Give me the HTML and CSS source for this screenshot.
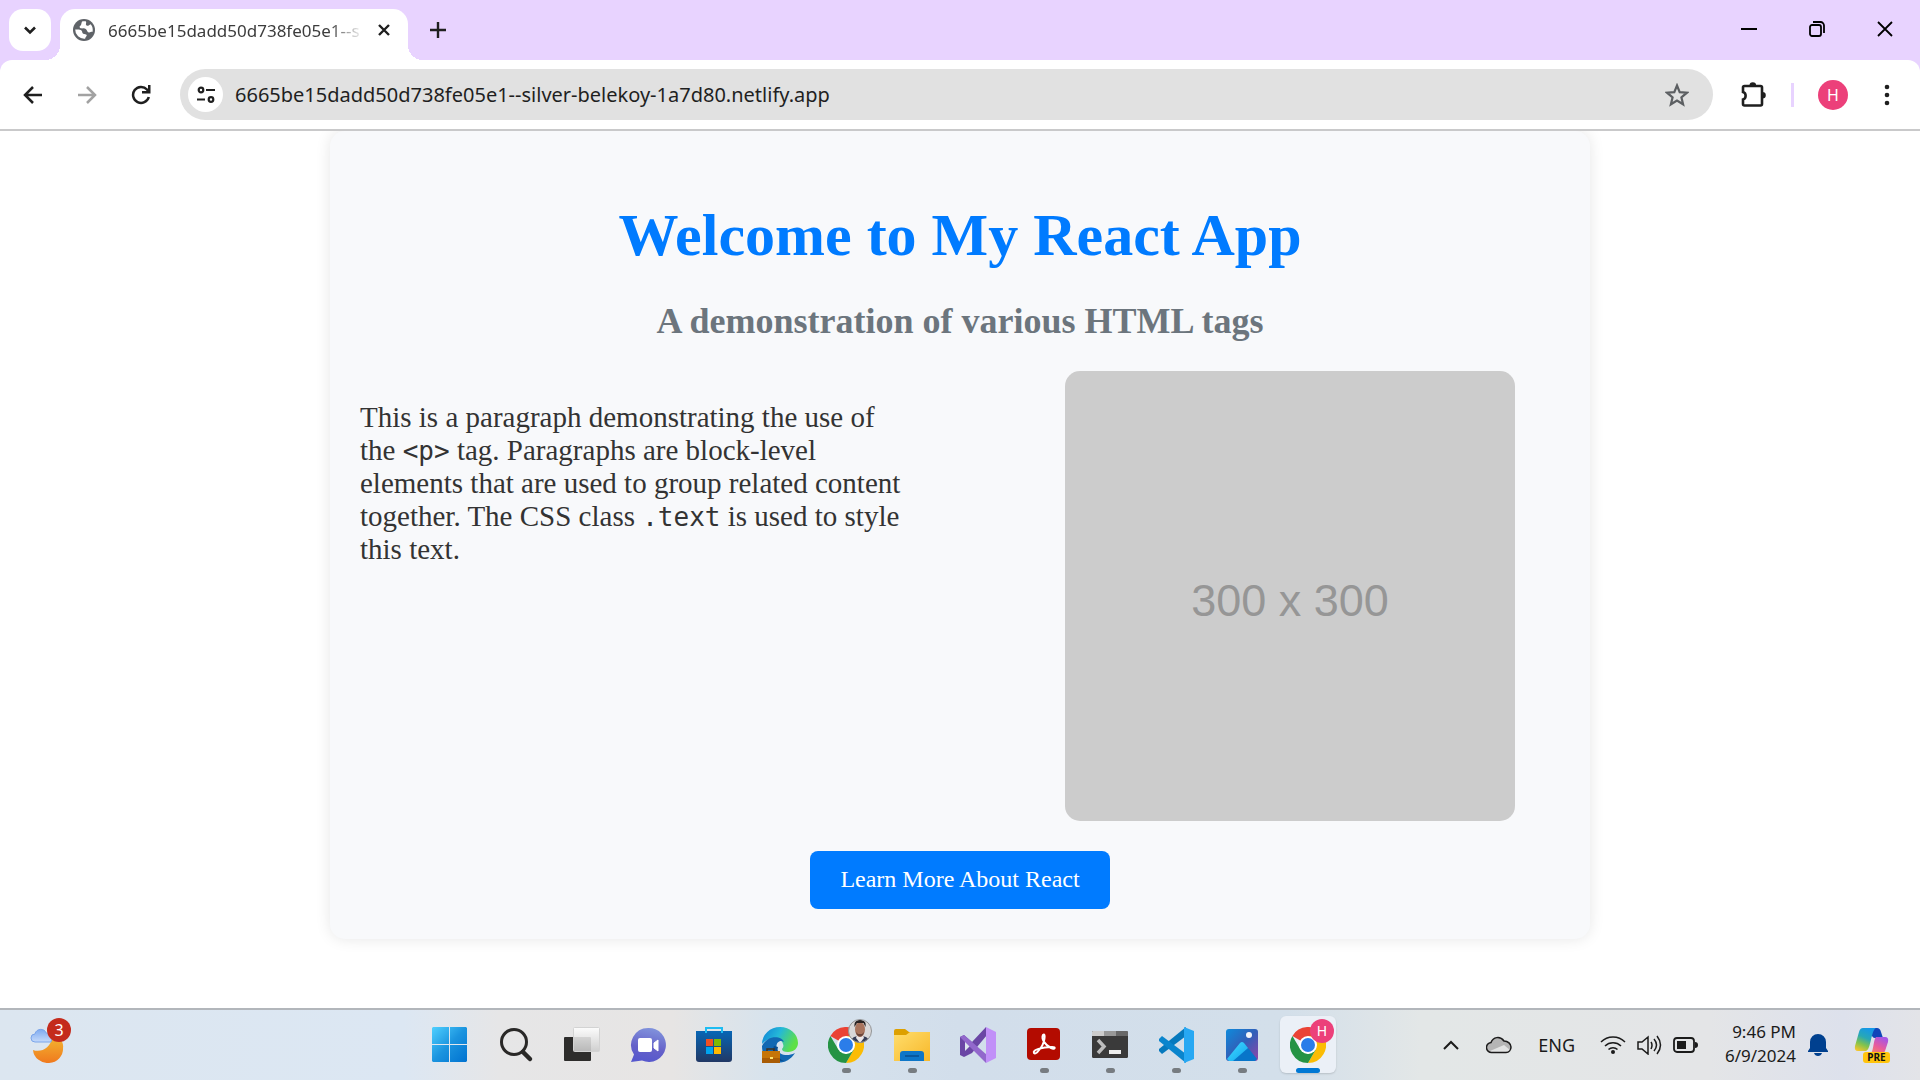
FILE: index.html
```html
<!DOCTYPE html>
<html lang="en">
<head>
<meta charset="utf-8">
<title>6665be15dadd50d738fe05e1--silver-belekoy-1a7d80.netlify.app</title>
<link rel="stylesheet" href="styles.css">
</head>
<body>
<header class="browser">
  <div class="tabstrip">
    <button class="tab-search" aria-label="Search tabs"><svg width="14" height="14" viewBox="0 0 14 14"><path d="M2 4.500l5 5 5-5" fill="none" stroke="#1f1f1f" stroke-width="2.600"/></svg></button>
    <div class="tab">
      <svg width="22" height="22" viewBox="0 0 22 22"><circle cx="11" cy="11" r="11" fill="#5f6368"/><path d="M2.200 10.500c2.600 0 5-.3 6.300 1 1.200 1.200.3 2.400 1.700 3.200 1.200.6 3 0 3.500 1.300.3 1-1 1.500-1.600 3.700A9 9 0 0 1 2.200 10.500zM9 2.500c-1 2-.3 3.700-2 4.500-.8.500-.3 2 .8 2.300 2 .4 3.600-.5 5 .7 1.500 1.200 1.200 3.200 3 3.400 1.400.2 2.300-.7 3.800-.5.500-3.300-.2-6-2-7.700-1.500.7-2.500 2.200-4 1.300C12 5.400 14 3.500 12.700 2.300 11.500 2 10 2.200 9 2.500z" fill="#fff"/></svg>
      <span class="tab-title">6665be15dadd50d738fe05e1--s</span>
      <button class="plain" aria-label="Close tab"><svg width="14" height="14" viewBox="0 0 14 14"><path d="M2 2l10 10M12 2L2 12" stroke="#1f1f1f" stroke-width="2.400"/></svg></button>
    </div>
    <button class="plain new-tab" aria-label="New tab"><svg width="16" height="16" viewBox="0 0 16 16"><path d="M8 0v16M0 8h16" stroke="#1f1f1f" stroke-width="2.400"/></svg></button>
    <div class="window-controls">
      <button class="plain" aria-label="Minimize"><svg width="16" height="16" viewBox="0 0 16 16"><path d="M0 8h16" stroke="#000" stroke-width="2"/></svg></button>
      <button class="plain" aria-label="Restore"><svg width="16" height="16" viewBox="0 0 16 16" fill="none" stroke="#000" stroke-width="1.800"><rect x="1" y="4" width="11" height="11" rx="2"/><path d="M4 1h7.500A3.500 3.500 0 0 1 15 4.500V12"/></svg></button>
      <button class="plain" aria-label="Close"><svg width="16" height="16" viewBox="0 0 16 16"><path d="M1 1l14 14M15 1L1 15" stroke="#000" stroke-width="1.800"/></svg></button>
    </div>
  </div>
  <div class="toolbar">
    <div class="nav-buttons">
      <button class="plain" aria-label="Back"><svg width="20" height="20" viewBox="0 0 20 20"><path d="M19 10H3M10 2l-8 8 8 8" fill="none" stroke="#1f1f1f" stroke-width="2.500"/></svg></button>
      <button class="plain" aria-label="Forward"><svg width="20" height="20" viewBox="0 0 20 20"><path d="M1 10h16M10 2l8 8-8 8" fill="none" stroke="#a2a2a2" stroke-width="2.500"/></svg></button>
      <button class="plain" aria-label="Reload"><svg width="20" height="20" viewBox="0 0 20 20"><path d="M17.800 12A8 8 0 1 1 16 4.500l1.500 2" fill="none" stroke="#1f1f1f" stroke-width="2.500"/><path d="M19.500 0v8.500H11V6h6V0z" fill="#1f1f1f"/></svg></button>
    </div>
    <div class="omnibox">
      <button class="site-info" aria-label="Site information"><svg width="20" height="20" viewBox="0 0 20 20" fill="none" stroke="#1f1f1f" stroke-width="2.200"><circle cx="5" cy="5" r="2.300"/><path d="M10 5h9M1 14.500h8"/><circle cx="15" cy="14.500" r="2.300"/></svg></button>
      <input class="url" type="text" aria-label="Address" value="6665be15dadd50d738fe05e1--silver-belekoy-1a7d80.netlify.app">
      <button class="plain" aria-label="Bookmark"><svg width="24" height="24" viewBox="0 0 24 24"><path d="M12 2.500l2.700 6.700 7.200.5-5.500 4.600 1.700 7L12 17.500l-6.100 3.800 1.700-7L2.100 9.700l7.200-.5z" fill="none" stroke="#5c5f62" stroke-width="2.200"/></svg></button>
    </div>
    <div class="toolbar-actions">
      <button class="plain" aria-label="Extensions"><svg width="26" height="26" viewBox="0 0 26 26"><path d="M4 4H19.500a1.500 1.500 0 0 1 1.500 1.500V22A1.500 1.500 0 0 1 19.500 23.500H3.500A1.500 1.500 0 0 1 2 22v-4.500c3.500-1 3.500-6.500 0-7.500V5.500A1.500 1.500 0 0 1 3.500 4z" fill="none" stroke="#1f1f1f" stroke-width="2.600"/><path d="M8.500 3.500a3.300 3.300 0 0 1 6.600 0zM21.500 10a3.300 3.300 0 0 1 0 6.600z" fill="#1f1f1f"/></svg></button>
      <span class="divider"></span>
      <button class="avatar" aria-label="Profile">H</button>
      <button class="plain" aria-label="Menu"><svg width="6" height="22" viewBox="0 0 6 22" fill="#1f1f1f"><circle cx="3" cy="3" r="2.300"/><circle cx="3" cy="11" r="2.300"/><circle cx="3" cy="19" r="2.300"/></svg></button>
    </div>
  </div>
</header>

<main class="page">
  <section class="card">
    <h1 class="title">Welcome to My React App</h1>
    <h2 class="subtitle">A demonstration of various HTML tags</h2>
    <div class="content">
      <p class="text">This is a paragraph demonstrating the use of the <code>&lt;p&gt;</code> tag. Paragraphs are block-level elements that are used to group related content together. The CSS class <code>.text</code> is used to style this text.</p>
      <div class="image-column"><div class="placeholder">300 x 300</div></div>
    </div>
    <a class="learn" href="#">Learn More About React</a>
  </section>
</main>

<footer class="taskbar">
  <div class="weather">
    <button class="task weather-button" aria-label="Weather">
      <svg width="36" height="36" viewBox="0 0 36 36"><defs><linearGradient id="moon" x2="0" y2="1"><stop stop-color="#f2b530"/><stop offset="1" stop-color="#f0791e"/></linearGradient><linearGradient id="cloud" x2="0" y2="1"><stop stop-color="#7eaaf0"/><stop offset="1" stop-color="#c5dafa"/></linearGradient></defs><path d="M3 23c8 3 18-2 19-13 8 0 12 5 11 11a15 14 0 0 1-30 2z" fill="url(#moon)"/><path d="M5 15a4 4 0 0 1 0-8c1-6 10-6 11-1 4 0 7 3 5 9z" fill="url(#cloud)" stroke="#7ba5ea"/></svg>
      <span class="count">3</span>
    </button>
  </div>
  <nav class="apps" aria-label="Taskbar">
    <button class="task" aria-label="Start"><svg width="36" height="36" viewBox="0 0 36 36"><defs><linearGradient id="win" x2="1" y2="1"><stop stop-color="#4fd0ff"/><stop offset=".5" stop-color="#1b94df"/><stop offset="1" stop-color="#0072d0"/></linearGradient></defs><path d="M1 0h16v17H0V1zM18 0h16l1 1v16H18zM0 18h17v17H1l-1-1zM18 18h17v16l-1 1H18z" fill="url(#win)"/></svg></button>
    <button class="task" aria-label="Search"><svg width="36" height="36" viewBox="0 0 36 36" fill="none" stroke="#292827"><circle cx="16" cy="15" r="12.500" stroke-width="3"/><path d="M25 25l7 7" stroke-width="4.500" stroke-linecap="round"/></svg></button>
    <button class="task" aria-label="Task view"><svg width="36" height="36" viewBox="0 0 36 36"><defs><linearGradient id="tv" x2="0" y2="1"><stop stop-color="#fff"/><stop offset="1" stop-color="#ccc"/></linearGradient></defs><rect y="10" width="27" height="24" rx="1" fill="#2d2c2b"/><rect x="9.500" y=".5" width="26" height="24" rx="1" fill="url(#tv)" fill-opacity=".88" stroke="#d3d3d3"/></svg></button>
    <button class="task" aria-label="Chat"><svg width="36" height="36" viewBox="0 0 36 36"><defs><linearGradient id="chat" x1=".6" x2=".4" y2="1"><stop stop-color="#8193dc"/><stop offset=".6" stop-color="#6561c9"/><stop offset="1" stop-color="#5658cd"/></linearGradient></defs><path d="M18 1a17 17 0 1 1-6 32.500L1 35l3-7.500A17 17 0 0 1 18 1z" fill="url(#chat)"/><rect x="8" y="11" width="14" height="14" rx="2" fill="#fff"/><path d="M24 16l4-3v11l-4-3z" fill="#fff" stroke="#fff" stroke-linejoin="round"/></svg></button>
    <button class="task" aria-label="Store"><svg width="36" height="36" viewBox="0 0 36 36"><defs><linearGradient id="store" x2="0" y2="1"><stop stop-color="#0766b5"/><stop offset="1" stop-color="#213865"/></linearGradient></defs><path d="M10 7V1h16v6" fill="none" stroke="#1dbcf2" stroke-width="2"/><path d="M0 4h36v28a3 3 0 0 1-3 3H3a3 3 0 0 1-3-3z" fill="url(#store)"/><path d="M10 6V3M26 6V3" stroke="#1dbcf2" stroke-width="2"/><path d="M10 12h7v7h-7z" fill="#f25022"/><path d="M18 12h7v7h-7z" fill="#7fba00"/><path d="M10 20h7v7h-7z" fill="#00a4ef"/><path d="M18 20h7v7h-7z" fill="#ffb900"/></svg></button>
    <button class="task" aria-label="Edge"><svg width="36" height="36" viewBox="0 0 36 36"><defs><linearGradient id="edge" x2="1" y2=".4"><stop offset=".1" stop-color="#128bd8"/><stop offset=".5" stop-color="#24b8d8"/><stop offset="1" stop-color="#5ee047"/></linearGradient></defs><path d="M0 17A18 17 0 0 1 18 0c10 0 18 7 18 16 0 5-4 9-10 9-4 0-6-1-6-3 1-1 2-3 1-5C19 10 8 9 0 17z" fill="url(#edge)"/><path d="M0 19C6 7 20 9 22 15c-5-3-9 2-7 7 2 6 10 8 18 4-5 8-13 11-21 9C3 33 0 27 0 19z" fill="#1268b3"/><path d="M12 19c-4 8 3 17 12 15-7 0-10-7-8-14z" fill="#084d91"/><path d="M5 25v-3h7v3" fill="none" stroke="#42311f" stroke-width="1.500"/><rect y="24" width="18" height="12" fill="#c67508"/><path d="M0 31h18v5H0z" fill="#a95c05"/><path d="M8 30h3v2H8z" fill="#ffe36c"/></svg></button>
    <button class="task running" aria-label="Chrome"><svg width="36" height="36" viewBox="0 0 36 36"><g id="chrome"><path d="M18 18L2.400 9A18 18 0 0 1 33.600 9z" fill="#ea4335"/><path d="M18 9h15.600A18 18 0 0 1 18 36l8-14z" fill="#fbbc04"/><path d="M2.400 9l8 13.500L18 27l7.800-4.500L18 36A18 18 0 0 1 2.400 9z" fill="#259344"/><circle cx="18" cy="18" r="9" fill="#fff"/><circle cx="18" cy="18" r="7" fill="#2b7de9"/></g></svg>
      <svg class="profile" width="24" height="24" viewBox="0 0 24 24"><defs><clipPath id="face"><circle cx="12" cy="12" r="11.500"/></clipPath></defs><g clip-path="url(#face)"><path d="M0 0h24v24H0z" fill="#d9d8d9"/><path d="M3 24c0-6 4-7 9-7s9 1 9 7z" fill="#363d57"/><path d="M9 16h6l1 3-4 5-4-5z" fill="#ece7e8"/><ellipse cx="12" cy="10.500" rx="5" ry="7.500" fill="#a9745d"/><path d="M6.500 8C6 3 8 1 12 1s6.500 2 5.500 7l-2-4H9z" fill="#2a2322"/><path d="M8 13c1 6 7 6 8 0l-2 2h-4z" fill="#6b463b"/></g><circle cx="12" cy="12" r="11.500" fill="none" stroke="#929496"/></svg></button>
    <button class="task running" aria-label="File Explorer"><svg width="36" height="36" viewBox="0 0 36 36"><defs><linearGradient id="folder" x2="1" y2="1"><stop stop-color="#ffdd6c"/><stop offset="1" stop-color="#f7b82a"/></linearGradient></defs><path d="M0 4a2 2 0 0 1 2-2h9l4 3h19a2 2 0 0 1 2 2v7H0z" fill="#dda000"/><path d="M0 8h12l4-3h20v29H0z" fill="url(#folder)"/><path d="M6 34v-7a3 3 0 0 1 3-3h18a3 3 0 0 1 3 3v7z" fill="#0d76c8"/><path d="M11 29h14" stroke="#074f91" stroke-width="1.500"/></svg></button>
    <button class="task" aria-label="Visual Studio"><svg width="36" height="36" viewBox="0 0 36 36"><path d="M0 10l4-2 8 7L26 0l1 8-15 18-8 4-4-2z" fill="#6a46a5"/><path d="M5 14l5 5-5 5z" fill="#dce5ee"/><path d="M4 8L27 28l-1 8L0 10z" fill="#9268cc"/><path d="M26 0l10 5v26l-10 5z" fill="#c190f8"/></svg></button>
    <button class="task running" aria-label="Acrobat"><svg width="36" height="36" viewBox="0 0 36 36"><rect x="1" y="1" width="33" height="32" rx="4" fill="#b30b00"/><path d="M8 26c-2-3 8-6 18-6 5 0 2 3-1 1-6-3-10-9-8-13 3-3 2 9-4 15-2 3-4 4-5 3z" fill="none" stroke="#fff" stroke-width="2"/></svg></button>
    <button class="task running" aria-label="Terminal"><svg width="36" height="36" viewBox="0 0 36 36"><rect y="4" width="36" height="27" rx="1.500" fill="#3a3a3a"/><path d="M1 4h11v5H0V5z" fill="#ccc"/><path d="M12 4h12v5H12z" fill="#989898"/><path d="M24 4h11l1 1v4H24z" fill="#686868"/><path d="M6 13l6 6.500L6 26" fill="none" stroke="#bdbdbd" stroke-width="3.500"/><path d="M17 23h12v4H17z" fill="#eee"/></svg></button>
    <button class="task running" aria-label="Visual Studio Code"><svg width="36" height="36" viewBox="0 0 36 36"><path d="M1 24l3 3L28 9V0L1 22z" fill="#0679bd"/><path d="M1 12l3-3 24 18v9L1 14z" fill="#0a85cd"/><path d="M26 0l10 4v28l-10 4z" fill="#27a8f3"/></svg></button>
    <button class="task running" aria-label="Photos"><svg width="36" height="36" viewBox="0 0 36 36"><defs><linearGradient id="photo" x2="1" y2="1"><stop stop-color="#0e8bdc"/><stop offset=".5" stop-color="#315fb8"/><stop offset="1" stop-color="#9145a9"/></linearGradient><linearGradient id="hill" x2="1" y2="1"><stop stop-color="#43dcff"/><stop offset="1" stop-color="#11a4ef"/></linearGradient></defs><rect x="2" y="2" width="32" height="32" rx="3" fill="url(#photo)"/><path d="M8 34l11-12q3-3 6 0l8 10-2 2z" fill="#0875c9"/><path d="M3 32l13-16q2-2 4 0l4 5L9 34H5z" fill="url(#hill)"/><circle cx="25" cy="8" r="3" fill="#f3f5fa"/></svg></button>
    <button class="task running active" aria-label="Chrome, H profile"><svg width="36" height="36" viewBox="0 0 36 36"><use href="#chrome"/></svg><span class="profile initial">H</span></button>
  </nav>
  <div class="tray">
    <button class="plain" aria-label="Show hidden icons"><svg width="16" height="10" viewBox="0 0 16 10"><path d="M1 9l7-7 7 7" fill="none" stroke="#1b1b1b" stroke-width="2"/></svg></button>
    <button class="plain" aria-label="OneDrive"><svg width="26" height="18" viewBox="0 0 26 18"><path d="M6 16.500a5 5 0 0 1-1-10C7 1 14-.5 18 5c4 0 7 3 7 6 0 3-2 5.500-5 5.500z" fill="#b5b5b5"/><path d="M4 15l14-6 6 5-3 2.500H6z" fill="#e2e3e3"/><path d="M6 16.500a5 5 0 0 1-1-10C7 1 14-.5 18 5c4 0 7 3 7 6 0 3-2 5.500-5 5.500z" fill="none" stroke="#1b1b1b" stroke-width="1.500"/></svg></button>
    <button class="plain lang">ENG</button>
    <button class="plain status" aria-label="Network, volume, battery">
      <svg width="26" height="20" viewBox="0 0 26 20" fill="none" stroke="#1b1b1b" stroke-width="1.500"><path d="M1 7a17 17 0 0 1 24 0M5 11a11.500 11.500 0 0 1 16 0M8.500 14.500a6.500 6.500 0 0 1 9 0"/><circle cx="13" cy="17" r="2" fill="#1b1b1b" stroke="none"/></svg>
      <svg width="26" height="20" viewBox="0 0 26 20" fill="none" stroke="#1b1b1b" stroke-width="1.500"><path d="M2 7h4l6-5v17l-6-5H2zM15 7q2 3 0 7M18 4q5 6 0 12M21 1q7 9 0 18"/></svg>
      <svg width="26" height="20" viewBox="0 0 26 20"><rect x="2" y="3" width="20" height="14" rx="3" fill="none" stroke="#1b1b1b" stroke-width="1.800"/><path d="M5 6h9v8H5zM23 7q3 0 3 3t-3 3z" fill="#1b1b1b"/></svg>
    </button>
    <div class="clock"><time>9:46 PM</time><time>6/9/2024</time></div>
    <button class="plain" aria-label="Notifications"><svg width="20" height="24" viewBox="0 0 20 24" fill="#00408f"><path d="M2 9a8 8 0 0 1 16 0v6l2 3v1H0v-1l2-3zM6 20h8q-1 3-4 3t-4-3z"/></svg></button>
    <button class="plain copilot" aria-label="Copilot"><svg width="36" height="36" viewBox="0 0 36 36"><defs><linearGradient id="cpa" x1=".6" x2=".2" y2="1"><stop stop-color="#1597e8"/><stop offset=".4" stop-color="#28a8b5"/><stop offset=".7" stop-color="#82c34c"/><stop offset="1" stop-color="#f4c52d"/></linearGradient><linearGradient id="cpb" x1=".7" x2=".2" y2="1"><stop stop-color="#a356e8"/><stop offset=".5" stop-color="#e95c9b"/><stop offset="1" stop-color="#f99157"/></linearGradient></defs><path d="M18 1h5q3 0 4 4l2 6h-8q-3 0-4-5z" fill="#1045b9"/><path d="M9 1h13c-5 2-5 22-10 23H4q-4 0-3-5L5 5q1-4 4-4z" fill="url(#cpa)"/><path d="M22 10h9q4 0 3 5l-3 9q-2 5-7 5h-9c5-3 4-16 7-19z" fill="url(#cpb)"/></svg><span class="pre">PRE</span></button>
  </div>
</footer>
</body>
</html>
```
FILE: styles.css
```css
* { box-sizing: border-box; }
body {
  margin: 0;
  min-height: 100vh;
  display: flex;
  flex-direction: column;
  background: #fff;
  font-family: "Liberation Serif", serif;
}
svg { display: block; flex: none; }
button { font: inherit; color: inherit; border: 0; padding: 0; cursor: pointer; }
.plain { background: none; display: flex; align-items: center; }

/* Browser frame */
.browser {
  font-family: "Noto Sans", sans-serif;
  background: #e8d3ff;
  border-bottom: 2px solid #c9c9ca;
}
.tabstrip { height: 60px; padding: 9px 23px 0 9px; display: flex; align-items: flex-start; }
.tab-search {
  width: 42px; height: 42px; margin-right: 9px;
  display: flex; align-items: center; justify-content: center;
  background: #fff; border-radius: 14px;
}
.tab {
  position: relative;
  width: 348px; height: 51px; padding: 0 17px 9px 13px;
  display: flex; align-items: center; gap: 13px;
  background: #fff; border-radius: 15px 15px 0 0;
}
.tab::before, .tab::after {
  content: ""; position: absolute; bottom: 0; width: 15px; height: 15px;
}
.tab::before { right: 100%; background: radial-gradient(circle at 0 0, transparent 15px, #fff 15px); }
.tab::after { left: 100%; background: radial-gradient(circle at 100% 0, transparent 15px, #fff 15px); }
.tab-title {
  flex: 1; overflow: hidden; white-space: nowrap;
  padding-top: 2px;
  font-size: 17px; line-height: 24px; color: #3c3c3c;
  -webkit-mask-image: linear-gradient(90deg, #000 86%, transparent 100%);
  mask-image: linear-gradient(90deg, #000 86%, transparent 100%);
}
.new-tab { margin-left: 22px; height: 42px; }
.window-controls { margin-left: auto; height: 40px; display: flex; align-items: center; gap: 52px; padding-right: 4px; }
.toolbar {
  height: 69px; padding: 0 30px 0 23px;
  display: flex; align-items: center;
  background: #fff; border-radius: 12px 12px 0 0;
}
.nav-buttons { display: flex; gap: 34px; margin-right: 29px; }
.omnibox {
  flex: 1; height: 51px; padding: 0 24px 0 8px;
  display: flex; align-items: center;
  background: #e1e1e1; border-radius: 26px;
}
.site-info {
  width: 35px; height: 35px; border-radius: 50%; background: #fff;
  display: flex; align-items: center; justify-content: center;
}
.url {
  flex: 1; min-width: 0; margin-left: 12px; padding: 0;
  border: 0; outline: 0; background: none;
  font: 20px/28px "Noto Sans", sans-serif; color: #1f1f1f;
}
.toolbar-actions { display: flex; align-items: center; gap: 24px; margin-left: 28px; }
.divider { width: 3px; height: 24px; background: #e8d3ff; }
.avatar { width: 30px; height: 30px; border-radius: 50%; background: #ec407a; color: #fff; font-size: 16px; line-height: 30px; }
.toolbar-actions .avatar { margin-right: 12px; }

/* Page */
.page { flex: 1; overflow: hidden; padding: 0 30px 69px; }
.card {
  max-width: 1260px; margin: 0 auto; padding: 70px 30px 30px;
  display: flex; flex-direction: column; align-items: center;
  background: #f8f9fb; border-radius: 15px;
  box-shadow: 0 0 15px rgba(0, 0, 0, .1);
}
.title { margin: 0; font-size: 60px; line-height: 68px; color: #007bff; }
.subtitle { margin: 31px 0 29px; font-size: 36px; line-height: 42px; color: #6c757d; }
.content { width: 100%; display: flex; justify-content: space-between; }
.text { width: 46%; margin: 30px 0 0; font-size: 29px; line-height: 33px; color: #333; }
.text code { font-family: "DejaVu Sans Mono", monospace; font-size: 26px; line-height: 1; }
.image-column { width: 45%; display: flex; justify-content: center; }
.placeholder {
  width: 450px; height: 450px; padding-top: 10px; border-radius: 15px;
  display: flex; align-items: center; justify-content: center;
  background: #ccc; color: #969696;
  font-family: "Liberation Sans", sans-serif; font-size: 45px;
}
.learn {
  margin-top: 30px; padding: 14px 30px 16px; border-radius: 8px;
  background: #007bff; color: #fff; text-decoration: none;
  font-size: 24px; line-height: 28px;
}

/* Taskbar */
.taskbar {
  height: 72px; border-top: 2px solid #b2b6bb;
  display: grid; grid-template-columns: minmax(0, 416fr) auto minmax(0, 578fr); align-items: center;
  background: linear-gradient(90deg, #dce6f0 0, #dce7f3 21%, #e6e6e7 26%, #e7e5e4 35%, #d7e3ed 40%, #d2deeb 50%, #d3dfea 67%, #e3e7e7 74%, #e4e5e7 89%, #dde1ec 96%, #e3e4e8 100%);
  font-family: "Noto Sans", sans-serif; color: #1b1b1b;
}
.weather { padding-left: 15px; }
.apps { display: flex; }
.task {
  position: relative; width: 66px; height: 70px;
  display: flex; align-items: center; justify-content: center;
  background: none;
}
.running::after {
  content: ""; position: absolute; bottom: 7px; left: 50%;
  width: 9px; height: 5px; margin-left: -4px;
  border-radius: 3px; background: #777c81;
}
.active::before {
  content: ""; position: absolute; inset: 6px 5px 7px;
  border-radius: 6px; background: #ebf0f7; box-shadow: 0 1px 2px rgba(0, 0, 0, .15);
}
.active svg { position: relative; }
.active::after { width: 24px; margin-left: -12px; background: #0078d4; }
.profile { position: absolute; top: 9px; right: 7px; }
.initial {
  width: 24px; height: 24px; border-radius: 50%;
  background: #ec407a; color: #fff; font-size: 14px; line-height: 24px;
}
.count {
  position: absolute; top: 8px; right: 10px;
  width: 24px; height: 24px; border-radius: 50%;
  background: #c42b1c; color: #fff; font-size: 16px; line-height: 24px;
}
.tray { display: flex; align-items: center; justify-content: flex-end; padding-right: 30px; }
.lang { margin: 0 25px 0 26px; font-size: 18px; }
.tray > .plain:first-child { margin-right: 27px; }
.status { gap: 10px; margin-right: 12px; }
.clock { width: 86px; margin-right: 12px; font-size: 17px; line-height: 24px; padding-bottom: 2px; }
.clock time { display: block; text-align: right; white-space: nowrap; }
.copilot { position: relative; margin-left: 26px; }
.pre {
  position: absolute; right: 0; bottom: 0; width: 27px; height: 11px;
  border-radius: 3px; background: #ffc40d; color: #111;
  font-size: 10px; font-weight: 700; line-height: 11px;
}
```
